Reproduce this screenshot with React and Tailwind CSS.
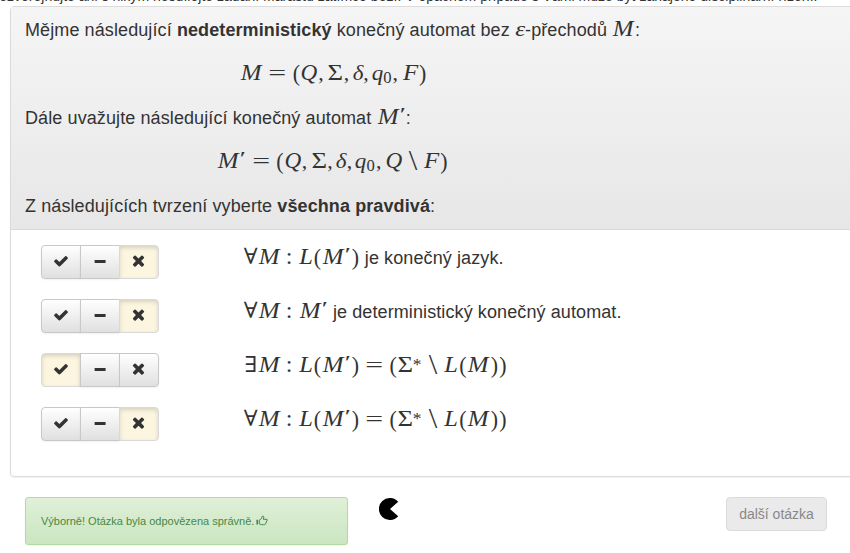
import React from "react";

// Advance widths follow the TeX math fonts, in em.
const GLYPHS = {
  M: ["M", "w-[1.051em]", "italic scale-x-[1.14] scale-y-[1.07]"],
  Q: ["Q", "w-[0.791em]", "italic scale-x-[1.06] scale-y-[1.07]"],
  F: ["F", "w-[0.749em]", "italic scale-x-[1.14] scale-y-[1.07]"],
  L: ["L", "w-[0.681em]", "italic scale-x-[1.12] scale-y-[1.07]"],
  q: ["q", "w-[0.446em]", "italic scale-x-[1.05]"],
  d: ["δ", "w-[0.444em]", "italic scale-x-[1.05]"],
  e: ["ε", "w-[0.466em]", "italic scale-x-[1.15]"],
  S: ["Σ", "w-[0.722em]", "scale-x-[1.22] scale-y-[1.07]"],
  "(": ["(", "w-[0.389em]", "scale-y-[1.1]"],
  ")": [")", "w-[0.389em]", "scale-y-[1.1]"],
  ",": [",", "w-[0.278em] mr-[0.167em]", ""],
  "=": ["=", "w-[0.778em] mx-[0.278em]", "scale-x-[1.45]"],
  ":": [":", "w-[0.278em] mx-[0.278em]", "scale-110 -translate-y-px"],
  "\\": ["\\", "w-[0.5em] mx-[0.222em]", "scale-x-[1.4] scale-y-[1.3]"],
  A: ["∀", "w-[0.556em]", "scale-x-[1.05]"],
  E: ["∃", "w-[0.556em]", "scale-x-[1.08]"],
  0: ["0", "w-[0.454em]", "text-[0.76em] translate-y-[3px]"],
  "'": ["′", "w-[0.295em]", "text-[0.8em] -translate-y-[4px] scale-x-[1.6] scale-y-[1.1]"],
  "*": ["*", "w-[0.454em]", "text-[0.8em] -translate-y-[2px] -translate-x-px"],
};

function Tex({ children }) {
  return (
    <span className="inline-flex items-baseline font-['Liberation_Serif','DejaVu_Serif',serif] text-[21.88px] tracking-normal">
      {children.split("").map((c, i) => {
        const [glyph, box, style] = GLYPHS[c];
        return (
          <span key={i} className={`inline-flex shrink-0 items-baseline justify-center ${box}`}>
            <span className={`inline-block ${style}`}>{glyph}</span>
          </span>
        );
      })}
    </span>
  );
}

const CheckIcon = () => (
  <svg className="-mt-[2px]" width="16" height="16" viewBox="0 0 1792 1792" fill="#333">
    <path d="M1671 566q0 40-28 68l-724 724-136 136q-28 28-68 28t-68-28l-136-136-362-362q-28-28-28-68t28-68l136-136q28-28 68-28t68 28l294 295 656-657q28-28 68-28t68 28l136 136q28 28 28 68z" />
  </svg>
);

const MinusIcon = () => (
  <svg className="-mt-[2px]" width="16" height="16" viewBox="0 0 16 16" fill="#333">
    <rect x="2.6" y="7" width="11" height="3" rx="0.4" />
  </svg>
);

const TimesIcon = () => (
  <svg className="-ml-[2px] -mt-[4px]" width="17" height="17" viewBox="0 0 1792 1792" fill="#333">
    <path d="M1490 1322q0 40-28 68l-136 136q-28 28-68 28t-68-28l-294-294-294 294q-28 28-68 28t-68-28l-136-136q-28-28-28-68t28-68l294-294-294-294q-28-28-28-68t28-68l136-136q28-28 68-28t68 28l294 294 294-294q28-28 68-28t68 28l136 136q28 28 28 68t-28 68l-294 294 294 294q28 28 28 68z" />
  </svg>
);

const ThumbIcon = () => (
  <svg className="ml-[2px] -mt-px" width="12" height="12" viewBox="0 0 12 12" fill="none" stroke="#468847">
    <path d="M1.2 4.8v4.6" strokeWidth="1.6" />
    <path d="M3.3 5.1 5.4 3.6 6.4 1.2Q8 .8 7.8 2.3L7.3 4.3H11Q11.8 5 10.8 5.9L9.4 9.2Q8.8 9.8 7.4 9.7H5.6L3.3 8.9Z" strokeWidth="1" strokeLinejoin="round" />
  </svg>
);

const ICONS = [CheckIcon, MinusIcon, TimesIcon];

function Choice({ active }) {
  return (
    <div className="flex h-[34px] w-[118px] shrink-0">
      {ICONS.map((Icon, i) => (
        <button
          key={i}
          className={`flex h-[34px] w-10 shrink-0 items-center justify-center border ${
            i > 0 ? "-ml-px" : "rounded-l"
          } ${i === 2 ? "rounded-r" : ""} ${
            active === i
              ? "border-[#d9d9d9] bg-[#fcf6e1] shadow-[inset_0_2px_4px_rgba(0,0,0,0.15)]"
              : "border-[#c8c8c8] bg-linear-to-b from-white to-[#e0e0e0] shadow-[0_1px_2px_rgba(0,0,0,0.06)]"
          }`}
        >
          <Icon />
        </button>
      ))}
    </div>
  );
}

const ROWS = [
  { active: 2, math: "AM:L(M')", text: "je konečný jazyk." },
  { active: 2, math: "AM:M'", text: "je deterministický konečný automat." },
  { active: 0, math: "EM:L(M')=(S*\\L(M))", text: "" },
  { active: 2, math: "AM:L(M')=(S*\\L(M))", text: "" },
];

export default function App() {
  return (
    <div className="h-[553px] w-[850px] overflow-hidden bg-white font-['Liberation_Sans',Arial,sans-serif] text-[#333]">
      <div className="flex h-[6px] items-end overflow-hidden">
        <p className="-ml-[11px] h-[20px] shrink-0 whitespace-nowrap text-[14px] leading-[20px] tracking-[0.022px]">
          Nezveřejňujte ani s nikým nesdílejte zadání Marastu zatímco beží! V opačném případě s Vámi může být zahájeno disciplinární řízení.
        </p>
      </div>

      <section className="ml-[10px] h-[471px] w-[860px] rounded border border-[#dbdbdb] shadow-[0_1px_2px_rgba(0,0,0,0.06)]">
        <header className="h-[223px] border-b border-[#d9d9d9] bg-linear-to-b from-[#f5f5f5] to-[#e7e7e7] pl-[14px] text-[18px] leading-[44px] tracking-[0.1px] whitespace-nowrap">
          <p className="h-[44px]">
            Mějme následující <b>nedeterministický</b> konečný automat bez <Tex>e</Tex>-přechodů <Tex>M</Tex>:
          </p>
          <p className="h-[44px] pl-[215px]"><Tex>M=(Q,S,d,q0,F)</Tex></p>
          <p className="h-[44px]">
            Dále uvažujte následující konečný automat <Tex>M'</Tex>:
          </p>
          <p className="h-[44px] pl-[192px]"><Tex>{"M'=(Q,S,d,q0,Q\\F)"}</Tex></p>
          <p className="h-[44px] pt-px">
            Z následujících tvrzení vyberte <b>všechna pravdivá</b>:
          </p>
        </header>
        <div className="flex flex-col gap-5 pl-[30px] pt-[15px]">
          {ROWS.map((row, i) => (
            <div key={i} className="flex h-[34px]">
              <Choice active={row.active} />
              <p className="ml-[86px] h-[24px] whitespace-nowrap text-[18px] leading-[24px] tracking-[0.1px]">
                <Tex>{row.math}</Tex> {row.text}
              </p>
            </div>
          ))}
        </div>
      </section>

      <footer className="mt-[20px] flex items-start pl-[25px]">
        <div className="flex h-[48px] w-[323px] items-center rounded-[3px] border border-[#b2dba1] bg-linear-to-b from-[#dff0d8] to-[#cbe6c0] pl-[15px] text-[11px] text-[#468847] shadow-[0_1px_2px_rgba(0,0,0,0.05)]">
          Výborně! Otázka byla odpovězena správně.
          <ThumbIcon />
        </div>
        <svg className="ml-[31px] mt-[1px]" width="22" height="22" viewBox="0 0 22 22">
          <path d="M11 11 19.2 3.8A11 11 0 1 0 19.2 18.2Z" fill="#000" />
        </svg>
        <button className="ml-[325px] h-[34px] w-[101px] rounded border border-[#dbdbdb] bg-[#eaeaea] text-[14px] text-[#888]">
          další otázka
        </button>
      </footer>
    </div>
  );
}
